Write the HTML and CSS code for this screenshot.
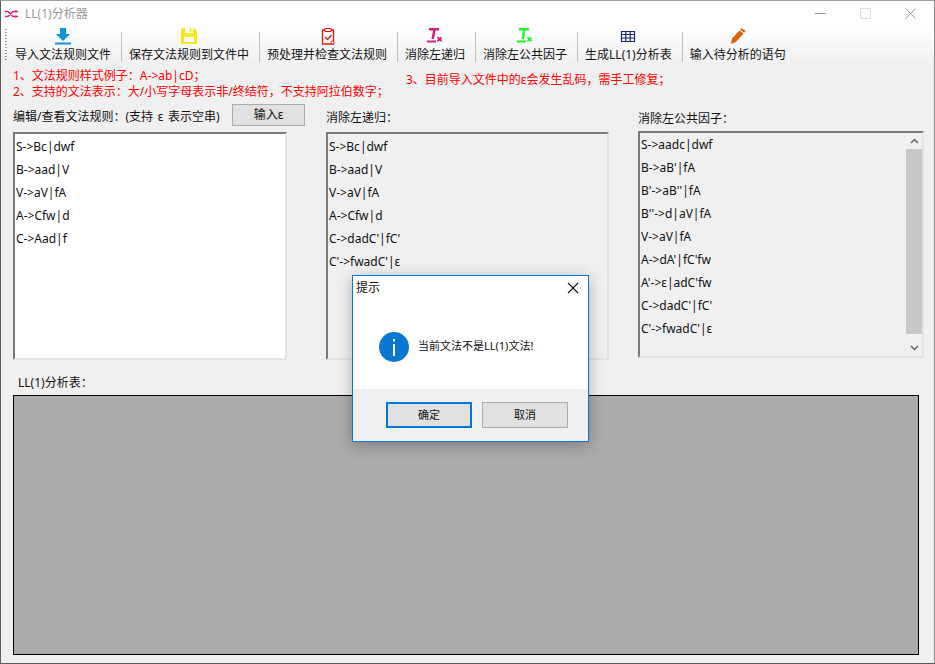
FILE: index.html
```html
<!DOCTYPE html>
<html lang="zh">
<head>
<meta charset="utf-8">
<title>LL(1)分析器</title>
<link rel="stylesheet" href="styles.css">
</head>
<body>
<div class="window">
  <header class="titlebar">
    <svg class="app-icon" viewBox="0 0 14 8" width="14" height="8"><path d="M0 1.500h3l5 5h3M0 6.500h3l5-5h3" fill="none" stroke="#d81e7a" stroke-width="1.400"/><path d="M10.500 0l3 1.500-3 1.500zM10.500 5l3 1.500-3 1.500z" fill="#d81e7a"/></svg>
    <span class="app-title">LL(1)分析器</span>
    <div class="controls">
      <svg width="11" height="11" viewBox="0 0 11 11"><path d="M0 5.500h11" stroke="#999" fill="none"/></svg>
      <svg width="11" height="11" viewBox="0 0 11 11"><rect x=".5" y=".5" width="10" height="10" fill="none" stroke="#ddd"/></svg>
      <svg width="11" height="11" viewBox="0 0 11 11"><path d="M.5.500l10 10M10.500.500l-10 10" stroke="#999" fill="none"/></svg>
    </div>
  </header>

  <nav class="toolbar">
    <div class="grip"></div>
    <div class="tool">
      <svg viewBox="0 0 18 18" width="18" height="18"><path d="M6 1h6v6h4l-7 7-7-7h4z" fill="#1296db"/><rect x="1" y="15.500" width="16" height="2" fill="#1296db"/></svg>
      <span>导入文法规则文件</span>
    </div>
    <div class="tool">
      <svg viewBox="0 0 18 18" width="18" height="18"><path d="M1 1h13l3 3v13H1z" fill="#f7e81e"/><rect x="5" y="1" width="8" height="5" fill="#fff"/><rect x="9.500" y="1.500" width="2" height="3.500" fill="#f7e81e"/><rect x="4" y="10" width="10" height="5" fill="#fff"/></svg>
      <span>保存文法规则到文件中</span>
    </div>
    <div class="tool">
      <svg viewBox="0 0 18 18" width="18" height="18"><path d="M7 3H4.500v14h11V3H13" fill="none" stroke="#d81e06" stroke-width="1.300"/><rect x="7" y="1.500" width="6" height="3" fill="#fff" stroke="#d81e06"/><path d="M7 10l2.500 2.500L13.500 8" fill="none" stroke="#d81e06" stroke-width="1.300"/><circle cx="14.500" cy="15.500" r="1.500" fill="#fff" stroke="#d81e06"/></svg>
      <span>预处理并检查文法规则</span>
    </div>
    <div class="tool">
      <svg viewBox="0 0 18 18" width="18" height="18"><path d="M3 1h10v2.500H9.500L8 12H5.500L7 3.500H3z" fill="#d81e7a"/><rect x="1" y="13.500" width="9" height="2" fill="#d81e7a"/><path d="M11.500 10h1.500l.5 1 1-1h1l.5 1-1 1 1 1.500-.5 1h-1l-1-1-1 1h-1l-.5-1 1-1.500-1-1z" fill="#d81e7a"/></svg>
      <span>消除左递归</span>
    </div>
    <div class="tool">
      <svg viewBox="0 0 18 18" width="18" height="18"><path d="M3 1h10v2.500H9.500L8 12H5.500L7 3.500H3z" fill="#1afa29"/><rect x="1" y="13.500" width="9" height="2" fill="#1afa29"/><path d="M11.500 10h1.500l.5 1 1-1h1l.5 1-1 1 1 1.500-.5 1h-1l-1-1-1 1h-1l-.5-1 1-1.500-1-1z" fill="#1afa29"/></svg>
      <span>消除左公共因子</span>
    </div>
    <div class="tool">
      <svg viewBox="0 0 18 18" width="18" height="18"><path d="M2.500 4.500h13v10h-13zM2.500 7.500h13M2.500 11h13M6.800 4.500v10M11.200 4.500v10" fill="none" stroke="#1a237e" stroke-width="1.200"/></svg>
      <span>生成LL(1)分析表</span>
    </div>
    <div class="tool tool-last">
      <svg viewBox="0 0 18 18" width="18" height="18"><path d="M12.500 1l4 3-1.200 1.700-4-3zM10.500 3.500l4 3-7.500 8.500L2 17l1-5.500z" fill="#e0620d"/></svg>
      <span>输入待分析的语句</span>
    </div>
  </nav>

  <main class="content">
    <section class="hints">
      <div class="hint-col">
        <p>1、文法规则样式例子：A-&gt;ab|cD；</p>
        <p>2、支持的文法表示：大/小写字母表示非/终结符，不支持阿拉伯数字；</p>
      </div>
      <p class="hint-third">3、目前导入文件中的ε会发生乱码，需手工修复；</p>
    </section>

    <section class="panels">
      <div class="panel panel-a">
        <div class="panel-head">
          <label>编辑/查看文法规则：(支持 ε 表示空串)</label>
          <button class="btn btn-eps">输入ε</button>
        </div>
        <div class="box box-white">
          <div>S-&gt;Bc|dwf</div>
          <div>B-&gt;aad|V</div>
          <div>V-&gt;aV|fA</div>
          <div>A-&gt;Cfw|d</div>
          <div>C-&gt;Aad|f</div>
        </div>
      </div>
      <div class="panel panel-b">
        <div class="panel-head"><label>消除左递归：</label></div>
        <div class="box">
          <div>S-&gt;Bc|dwf</div>
          <div>B-&gt;aad|V</div>
          <div>V-&gt;aV|fA</div>
          <div>A-&gt;Cfw|d</div>
          <div>C-&gt;dadC'|fC'</div>
          <div>C'-&gt;fwadC'|ε</div>
        </div>
      </div>
      <div class="panel panel-c">
        <div class="panel-head"><label>消除左公共因子：</label></div>
        <div class="box box-scroll">
          <div class="lines">
            <div>S-&gt;aadc|dwf</div>
            <div>B-&gt;aB'|fA</div>
            <div>B'-&gt;aB''|fA</div>
            <div>B''-&gt;d|aV|fA</div>
            <div>V-&gt;aV|fA</div>
            <div>A-&gt;dA'|fC'fw</div>
            <div>A'-&gt;ε|adC'fw</div>
            <div>C-&gt;dadC'|fC'</div>
            <div>C'-&gt;fwadC'|ε</div>
          </div>
          <div class="scrollbar">
            <svg width="9" height="6" viewBox="0 0 9 6"><path d="M1 5l3.500-3.500L8 5" fill="none" stroke="#606060" stroke-width="1.500"/></svg>
            <div class="thumb"></div>
            <svg width="9" height="6" viewBox="0 0 9 6"><path d="M1 1l3.500 3.500L8 1" fill="none" stroke="#606060" stroke-width="1.500"/></svg>
          </div>
        </div>
      </div>
    </section>

    <div class="table-label">LL(1)分析表：</div>
    <div class="table-area"></div>
  </main>

  <div class="dialog">
    <div class="dialog-title">
      <span>提示</span>
      <svg width="12" height="12" viewBox="0 0 12 12"><path d="M1 1l10 10M11 1L1 11" stroke="#111" fill="none" stroke-width="1.100"/></svg>
    </div>
    <div class="dialog-body">
      <svg width="30" height="30" viewBox="0 0 30 30"><circle cx="15" cy="15" r="15" fill="#0a78d2"/><rect x="14" y="12" width="2" height="12" fill="#fff"/><rect x="14" y="7" width="2" height="2.500" fill="#fff"/></svg>
      <span>当前文法不是LL(1)文法!</span>
    </div>
    <div class="dialog-foot">
      <button class="btn btn-primary">确定</button>
      <button class="btn btn-cancel">取消</button>
    </div>
  </div>
</div>
</body>
</html>
```
FILE: styles.css
```css
* { box-sizing: border-box; }
html, body { margin: 0; padding: 0; }
body {
  width: 935px;
  height: 664px;
  overflow: hidden;
  font-family: "Noto Sans", "Noto Sans CJK SC", sans-serif;
  font-size: 12px;
  line-height: 16px;
  color: #111;
}
p { margin: 0; }
.window {
  position: relative;
  width: 935px;
  height: 664px;
  display: flex;
  flex-direction: column;
  background: #f0f0f0;
  border: 1px solid #5c5c5c;
  border-top-color: #a0a0a0;
  border-right-color: #8c8c8c;
}
.titlebar {
  height: 25px;
  flex: none;
  display: flex;
  align-items: center;
  background: #fff;
  padding-left: 4px;
}
.app-icon { margin-right: 6px; }
.app-title { color: #999; }
.controls {
  margin-left: auto;
  display: flex;
  gap: 34px;
  padding-right: 18px;
}
.toolbar {
  height: 38px;
  flex: none;
  display: flex;
  background: linear-gradient(#ffffff, #f0f0f0);
  padding-left: 4px;
}
.grip {
  width: 2px;
  height: 32px;
  margin: 3px 1px 0 0;
  background: repeating-linear-gradient(#9a9a9a 0 1px, transparent 1px 3px);
}
.tool {
  position: relative;
  display: flex;
  flex-direction: column;
  align-items: center;
  padding: 1px 10px 0 7px;
  white-space: nowrap;
}
.tool svg { display: block; height: 18px; }
.tool span { margin-top: 2px; }
.tool::after {
  content: "";
  position: absolute;
  right: -1px;
  top: 6px;
  bottom: 2px;
  width: 1px;
  background: #c0c0c0;
}
.tool + .tool { margin-left: 1px; }
.tool-last::after { display: none; }
.content {
  flex: 1;
  display: flex;
  flex-direction: column;
  padding: 0 10px 8px 12px;
  min-height: 0;
}
.hints {
  height: 40px;
  flex: none;
  display: flex;
  color: #ff0000;
  padding-top: 4px;
}
.hint-col { width: 393px; }
.hint-third { padding-top: 4px; }
.panels { display: flex; flex: none; height: 256px; }
.panel { display: flex; flex-direction: column; flex: none; }
.panel-a { width: 274px; margin-right: 39px; }
.panel-b { width: 283px; margin-right: 29px; }
.panel-c { width: 286px; margin-top: -1px; }
.panel-head {
  height: 28px;
  flex: none;
  display: flex;
  align-items: flex-start;
}
.panel-a .panel-head label {
  flex: none;
  padding-top: 5px;
  width: 219px;
  white-space: nowrap;
  word-spacing: 1.500px;
}
.panel-b .panel-head label { padding-top: 6px; }
.panel-c .panel-head label { padding-top: 8px; }
.box {
  flex: none;
  height: 228px;
  padding-top: 1px;
  padding-left: 1px;
  line-height: 23px;
  border: 2px solid;
  border-color: #7a7a7a #e3e3e3 #e3e3e3 #7a7a7a;
  background: #f0f0f0;
  overflow: hidden;
}
.box-white { background: #fff; }
.box-scroll { display: flex; height: 227px; padding: 0 0 0 1px; }
.lines { flex: 1; }
.scrollbar {
  width: 16px;
  display: flex;
  flex-direction: column;
  align-items: center;
  padding: 5px 0;
  background: #f0f0f0;
}
.thumb { flex: none; width: 16px; height: 185px; margin: 5px 0 11px; background: #c8c8c8; }
.table-label {
  height: 20px;
  flex: none;
  margin: 15px 0 0 5px;
}
.table-area {
  flex: 1;
  margin-right: 5px;
  background: #ababab;
  border: 1px solid #000;
}
.btn {
  font: inherit;
  color: #111;
  background: #e1e1e1;
  border: 1px solid #adadad;
  padding: 0;
}
.btn-eps { flex: none; width: 73px; height: 22px; }
.dialog {
  position: absolute;
  left: 351px;
  top: 274px;
  width: 237px;
  height: 167px;
  display: flex;
  flex-direction: column;
  background: #fff;
  border: 1px solid #0078d7;
  box-shadow: 0 3px 14px rgba(0, 0, 0, .28);
}
.dialog-title {
  height: 24px;
  flex: none;
  display: flex;
  align-items: center;
  justify-content: space-between;
  padding: 0 9px 0 3px;
}
.dialog-body {
  flex: 1;
  display: flex;
  align-items: center;
  gap: 9px;
  padding: 4px 0 0 26px;
  font-size: 11px;
}
.dialog-body span { position: relative; top: -1px; }
.dialog-foot {
  height: 52px;
  flex: none;
  display: flex;
  gap: 10px;
  padding: 13px 0 0 33px;
  background: #f0f0f0;
}
.dialog-foot .btn { width: 86px; height: 26px; font-size: 11px; }
.btn-primary { border: 2px solid #0078d7; }
```
